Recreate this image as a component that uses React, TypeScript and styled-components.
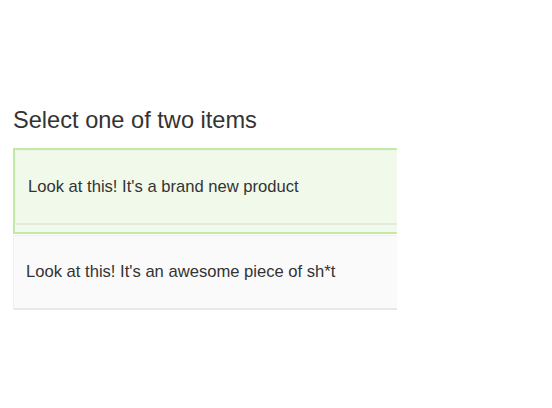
import React from "react";
import styled, { createGlobalStyle } from "styled-components";

const Global = createGlobalStyle`
  html, body { margin: 0; padding: 0; background: #ffffff; }
  body { font-family: "Liberation Sans", Arial, Helvetica, sans-serif; color: #333333; }
`;

const Page = styled.div`
  padding: 107px 0 0 13px;
`;

const Title = styled.h3`
  margin: 0 0 15px;
  font-size: 23.6px;
  line-height: 26px;
  font-weight: 400;
  color: #333;
`;

const List = styled.div`
  width: 384px;
  overflow: hidden;
  display: flex;
  flex-direction: column;
  gap: 1px;
`;

const Selected = styled.div`
  width: 420px;
  border: 2px solid #c3e9a6;
  border-right: none;
  background: #f1faea;
  padding-bottom: 7px;
  box-sizing: border-box;
`;

const Card = styled.div<{ $active?: boolean }>`
  width: 420px;
  box-sizing: border-box;
  height: ${(p) => (p.$active ? 75 : 75)}px;
  display: flex;
  align-items: center;
  padding: 0 12px;
  font-size: 16.6px;
  color: #333;
  background: ${(p) => (p.$active ? "#f1faea" : "#fafafa")};
  border: 1px solid ${(p) => (p.$active ? "#eef5e8" : "#f0f0f0")};
  border-bottom: 2px solid ${(p) => (p.$active ? "#e4ebdf" : "#e8e8e8")};
  border-radius: 2px;
`;

export default function App() {
  return (
    <>
      <Global />
      <Page>
        <Title>Select one of two items</Title>
        <List>
          <Selected>
            <Card $active>Look at this! It's a brand new product</Card>
          </Selected>
          <Card>Look at this! It's an awesome piece of sh*t</Card>
        </List>
      </Page>
    </>
  );
}
